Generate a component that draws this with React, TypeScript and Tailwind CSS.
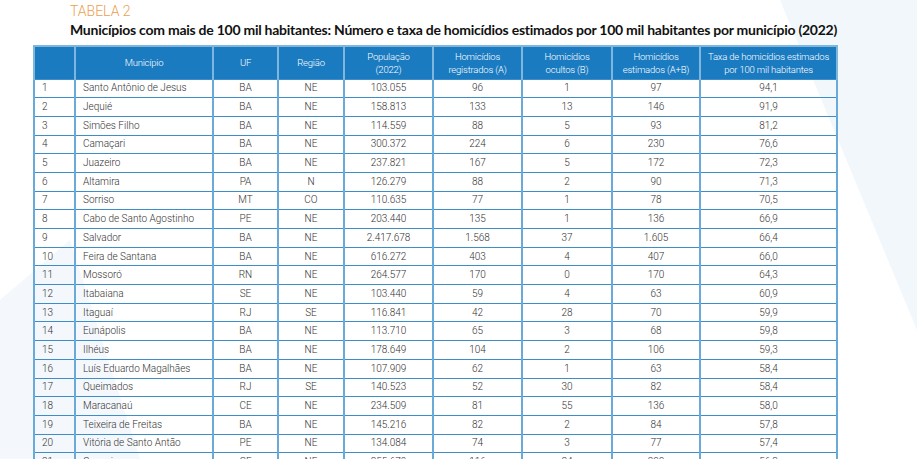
const rows: [string, string, string, string, string, string, string, string, string][] = [
  ["1", "Santo Antônio de Jesus", "BA", "NE", "103.055", "96", "1", "97", "94,1"],
  ["2", "Jequié", "BA", "NE", "158.813", "133", "13", "146", "91,9"],
  ["3", "Simões Filho", "BA", "NE", "114.559", "88", "5", "93", "81,2"],
  ["4", "Camaçari", "BA", "NE", "300.372", "224", "6", "230", "76,6"],
  ["5", "Juazeiro", "BA", "NE", "237.821", "167", "5", "172", "72,3"],
  ["6", "Altamira", "PA", "N", "126.279", "88", "2", "90", "71,3"],
  ["7", "Sorriso", "MT", "CO", "110.635", "77", "1", "78", "70,5"],
  ["8", "Cabo de Santo Agostinho", "PE", "NE", "203.440", "135", "1", "136", "66,9"],
  ["9", "Salvador", "BA", "NE", "2.417.678", "1.568", "37", "1.605", "66,4"],
  ["10", "Feira de Santana", "BA", "NE", "616.272", "403", "4", "407", "66,0"],
  ["11", "Mossoró", "RN", "NE", "264.577", "170", "0", "170", "64,3"],
  ["12", "Itabaiana", "SE", "NE", "103.440", "59", "4", "63", "60,9"],
  ["13", "Itaguaí", "RJ", "SE", "116.841", "42", "28", "70", "59,9"],
  ["14", "Eunápolis", "BA", "NE", "113.710", "65", "3", "68", "59,8"],
  ["15", "Ilhéus", "BA", "NE", "178.649", "104", "2", "106", "59,3"],
  ["16", "Luís Eduardo Magalhães", "BA", "NE", "107.909", "62", "1", "63", "58,4"],
  ["17", "Queimados", "RJ", "SE", "140.523", "52", "30", "82", "58,4"],
  ["18", "Maracanaú", "CE", "NE", "234.509", "81", "55", "136", "58,0"],
  ["19", "Teixeira de Freitas", "BA", "NE", "145.216", "82", "2", "84", "57,8"],
  ["20", "Vitória de Santo Antão", "PE", "NE", "134.084", "74", "3", "77", "57,4"],
  ["21", "Caucaia", "CE", "NE", "355.679", "116", "84", "200", "56,3"],
];

const headers = [
  "",
  "Município",
  "UF",
  "Região",
  "População\n(2022)",
  "Homicídios\nregistrados (A)",
  "Homicídios\nocultos (B)",
  "Homicídios\nestimados (A+B)",
  "Taxa de homicídios estimados\npor 100 mil habitantes",
];

const widths = ["w-[41px]", "w-[138px]", "w-[65px]", "w-[66px]", "w-[89px]", "w-[89px]", "w-[90px]", "w-[88px]", "w-[137px]"];

export default function App() {
  return (
    <div className="relative h-[459px] w-[917px] overflow-hidden bg-white font-['Roboto',sans-serif]">
      {/* faint background shapes */}
      <svg className="absolute inset-0" width="917" height="459">
        <polygon points="780,0 917,0 917,330" fill="#f2f7fc" />
        <polygon points="0,300 70,240 140,459 0,459" fill="#f4f8fc" />
      </svg>

      <div className="relative pl-[70px] pt-[2px]">
        <div className="text-[14px] leading-[18px] font-light text-[#eb9f52]">TABELA 2</div>
        <h1 className="font-['Lato',sans-serif] text-[14px] leading-[20px] font-bold tracking-[-0.25px] text-[#111]">
          Municípios com mais de 100 mil habitantes: Número e taxa de homicídios estimados por 100 mil habitantes por município (2022)
        </h1>
      </div>

      <table className="relative ml-[33px] mt-[5px] table-fixed border-collapse border-2 border-[#7fb6de] text-[10px]">
        <thead>
          <tr className="h-[33px] bg-[#1a7bc1] text-white">
            {headers.map((h, i) => (
              <th
                key={i}
                className={`${widths[i]} whitespace-pre-line border-x-2 border-[#7fb6de] px-0 text-center text-[9.5px] leading-[13px] font-light tracking-[-0.2px]`}
              >
                {h}
              </th>
            ))}
          </tr>
        </thead>
        <tbody className="font-light text-[#333]">
          {rows.map((r) => (
            <tr key={r[0]} className="h-[18.7px]">
              {r.map((c, i) => (
                <td
                  key={i}
                  className={`border border-[#3d8dc8] border-x-2 border-x-[#6aaad8] leading-[12px] ${
                    i < 2 ? "pl-[7px] text-left" : "text-center"
                  }`}
                >
                  {c}
                </td>
              ))}
            </tr>
          ))}
        </tbody>
      </table>
    </div>
  );
}
